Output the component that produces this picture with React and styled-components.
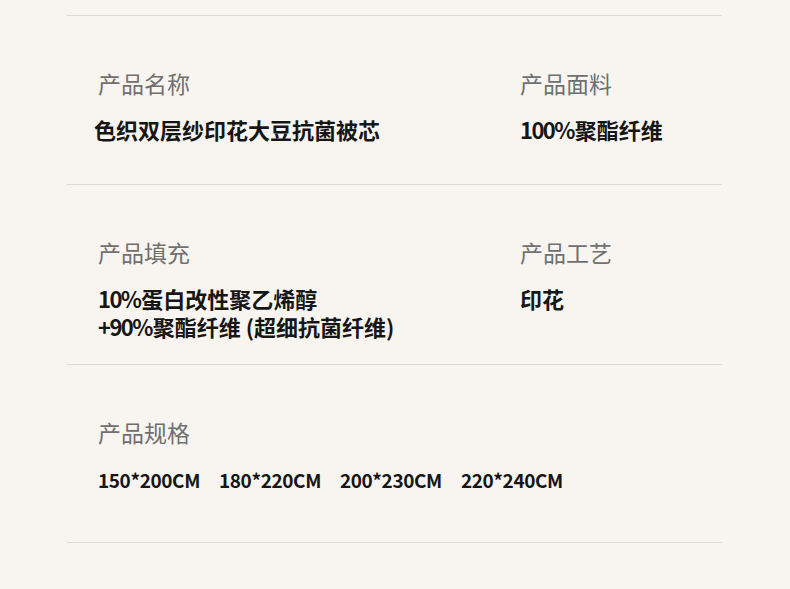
import React from "react";
import styled, { createGlobalStyle } from "styled-components";

const Global = createGlobalStyle`
  html, body {
    margin: 0;
    padding: 0;
    background: #f8f5f0;
  }
  body {
    font-family: "Noto Sans CJK SC", "Noto Sans", sans-serif;
  }
`;

const Page = styled.div`
  width: 790px;
  height: 589px;
  background: #f8f5f0;
  padding-top: 15px;
  box-sizing: border-box;
  overflow: hidden;
`;

const Table = styled.div`
  margin: 0 68px 0 67px;
  border-bottom: 1px solid #ddd9d3;
`;

const Row = styled.section`
  display: grid;
  grid-template-columns: 422px 1fr;
  padding: 51px 0 ${(p) => p.$bottom}px 31px;
  border-top: 1px solid #ddd9d3;
`;

const Cell = styled.div`
  display: flex;
  flex-direction: column;
  gap: 16px;
`;

const Label = styled.div`
  font-size: 23px;
  line-height: 32px;
  font-weight: 400;
  color: #707070;
`;

const Value = styled.div`
  font-size: 22px;
  line-height: 28px;
  font-weight: 700;
  color: #161616;
  margin-left: ${(p) => p.$shift || 0}px;
`;

const Num = styled.span`
  letter-spacing: -1.6px;
  margin-right: 1px;
`;

const Sizes = styled.div`
  display: flex;
  gap: 19px;
  margin-top: 2px;
`;

const Size = styled.span`
  font-size: 19px;
  line-height: 28px;
  font-weight: 700;
  color: #161616;
  letter-spacing: -0.4px;
`;

export default function App() {
  return (
    <>
      <Global />
      <Page>
        <Table>
          <Row $bottom={41}>
            <Cell>
              <Label>产品名称</Label>
              <Value $shift={-4}>色织双层纱印花大豆抗菌被芯</Value>
            </Cell>
            <Cell>
              <Label>产品面料</Label>
              <Value>
                <Num>100%</Num>聚酯纤维
              </Value>
            </Cell>
          </Row>
          <Row $bottom={24}>
            <Cell>
              <Label>产品填充</Label>
              <Value>
                <Num>10%</Num>蛋白改性聚乙烯醇
                <br />
                <Num>+90%</Num>聚酯纤维 (超细抗菌纤维)
              </Value>
            </Cell>
            <Cell>
              <Label>产品工艺</Label>
              <Value>印花</Value>
            </Cell>
          </Row>
          <Row $bottom={48}>
            <Cell>
              <Label>产品规格</Label>
              <Sizes>
                <Size>150*200CM</Size>
                <Size>180*220CM</Size>
                <Size>200*230CM</Size>
                <Size>220*240CM</Size>
              </Sizes>
            </Cell>
          </Row>
        </Table>
      </Page>
    </>
  );
}
